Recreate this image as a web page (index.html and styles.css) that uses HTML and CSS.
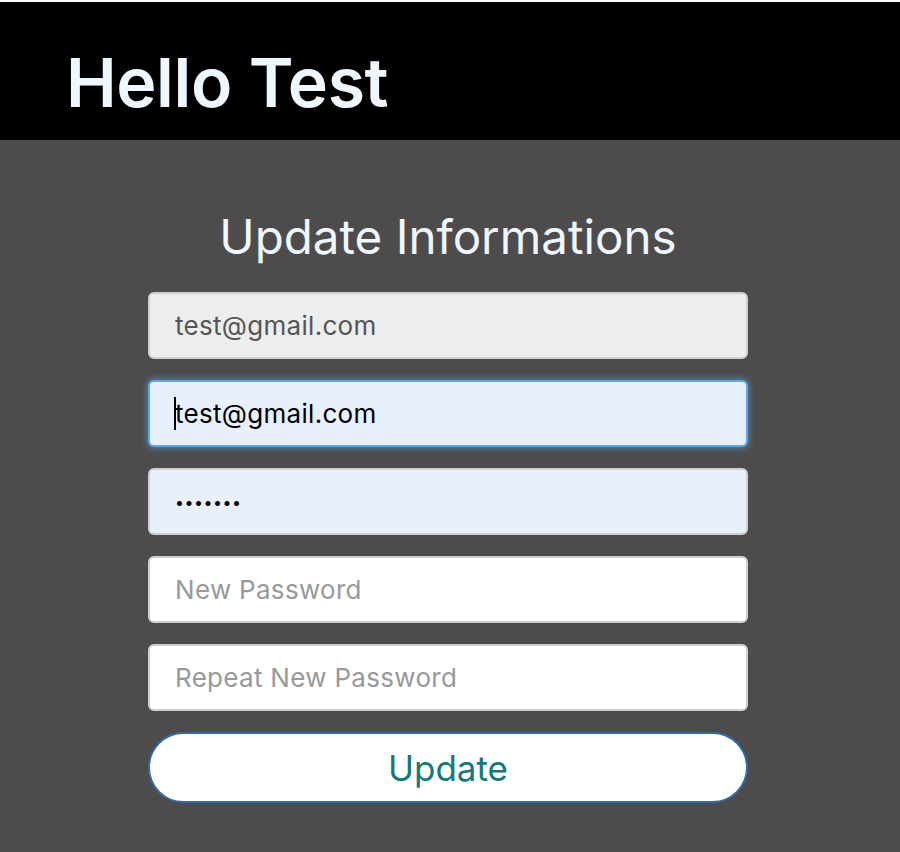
FILE: index.html
```html
<!DOCTYPE html>
<html>
<head>
<meta charset="utf-8">
<link rel="stylesheet" href="styles.css">
</head>
<body>
<div class="page">
  <header class="top">
    <h1 class="hello">Hello Test</h1>
  </header>
  <main class="content">
    <h2 class="title">Update Informations</h2>
    <form class="form">
      <input class="field readonly" type="text" value="test@gmail.com" readonly>
      <div class="field-wrap">
        <input class="field focused" type="text" value="test@gmail.com">
        <span class="caret"></span>
      </div>
      <input class="field autofill" type="password" value="1234567">
      <input class="field" type="password" placeholder="New Password">
      <input class="field" type="password" placeholder="Repeat New Password">
      <button class="btn" type="button">Update</button>
    </form>
  </main>
</div>
</body>
</html>
```
FILE: styles.css
```css
html, body {
  margin: 0;
  padding: 0;
  background: #ffffff;
  height: 100%;
}
body {
  font-family: Inter, "Open Sans", "Liberation Sans", sans-serif;
}
.page {
  padding-top: 2px;
  min-height: 850px;
  display: flex;
  flex-direction: column;
}
.top {
  background: #000000;
  height: 138px;
  box-sizing: border-box;
  display: flex;
  align-items: center;
  padding-left: 66px;
  padding-top: 22px;
}
.hello {
  margin: 0;
  color: #eef6ff;
  font-size: 68px;
  font-weight: 560;
  letter-spacing: -0.4px;
  line-height: 1;
}
.content {
  flex: 1;
  background: #4d4b4c;
  display: flex;
  flex-direction: column;
  align-items: center;
  padding-top: 71px;
  padding-right: 4px;
}
.title {
  margin: 0 0 29px 0;
  color: #eef6ff;
  font-size: 47.5px;
  font-weight: 400;
  line-height: 52px;
}
.form {
  width: 600px;
  display: flex;
  flex-direction: column;
  gap: 21px;
}
.field-wrap {
  position: relative;
  display: flex;
}
.field {
  box-sizing: border-box;
  width: 600px;
  height: 67px;
  border: 2px solid #cfcfcf;
  border-radius: 6px;
  background: #ffffff;
  padding: 0 25px;
  font-family: Inter, "Open Sans", "Liberation Sans", sans-serif;
  font-size: 26px;
  letter-spacing: 0.3px;
  color: #000000;
  outline: none;
}
.field::placeholder {
  color: #999999;
}
.readonly {
  background: #ededed;
  color: #555555;
}
.focused {
  background: #e8f0fe;
  border-color: #5aa9e6;
  box-shadow: 0 0 7px 1px rgba(90, 169, 230, 0.6);
}
.autofill {
  background: #e8f0fe;
  font-size: 16px;
  letter-spacing: 0.5px;
}
.caret {
  position: absolute;
  left: 26px;
  top: 17px;
  width: 2px;
  height: 33px;
  background: #000000;
}
.btn {
  box-sizing: border-box;
  width: 600px;
  height: 71px;
  border: 2px solid #2f6ea8;
  border-radius: 36px;
  background: #ffffff;
  color: #137a7a;
  font-family: Inter, "Open Sans", "Liberation Sans", sans-serif;
  font-size: 35px;
  font-weight: 400;
  cursor: pointer;
}
```
